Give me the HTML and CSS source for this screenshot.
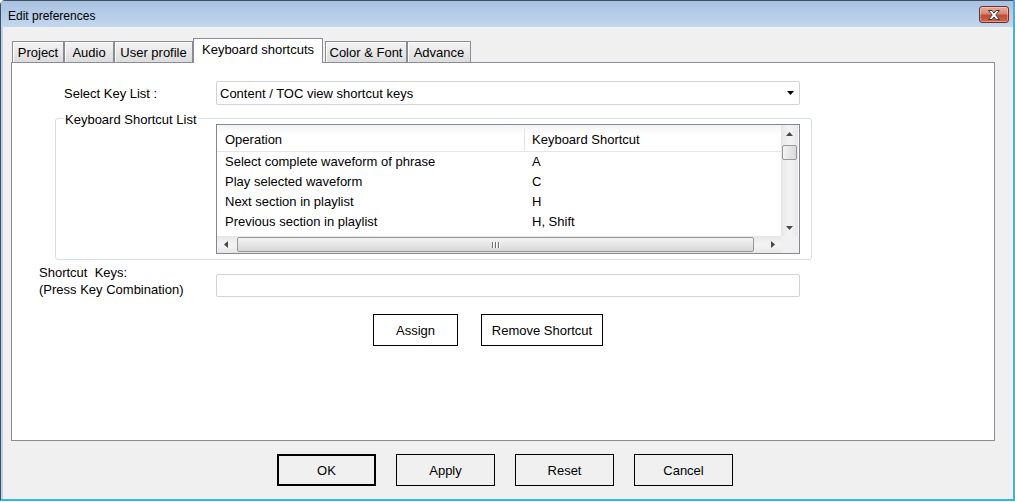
FILE: index.html
```html
<!DOCTYPE html>
<html>
<head>
<meta charset="utf-8">
<title>Edit preferences</title>
<link rel="stylesheet" href="styles.css">
</head>
<body>
<div class="window">
  <div class="titlebar">
    <span class="title">Edit preferences</span>
    <button class="close" aria-label="Close">
      <svg width="14" height="10" viewBox="0 0 14 10"><path d="M1.5 0.5 H5 L7 3 L9 0.5 H12.5 L8.8 5 L12.5 9.5 H9 L7 7 L5 9.5 H1.5 L5.2 5 Z" fill="#fff" stroke="#3b3b3b" stroke-width="1" stroke-linejoin="round"/></svg>
    </button>
  </div>
  <div class="client">
    <div class="tabs">
      <div class="tab tab-project">Project</div>
      <div class="tab tab-audio">Audio</div>
      <div class="tab tab-user">User profile</div>
      <div class="tab tab-keys active">Keyboard shortcuts</div>
      <div class="tab tab-color">Color &amp; Font</div>
      <div class="tab tab-advance">Advance</div>
    </div>
    <div class="panel">
      <div class="row-select">
        <span class="lbl-select">Select Key List :</span>
        <div class="combo">
          <span>Content / TOC view shortcut keys</span>
          <svg class="combo-arrow" width="7" height="4" viewBox="0 0 7 4"><path d="M0 0 H7 L3.5 4 Z" fill="#000"/></svg>
        </div>
      </div>
      <fieldset class="group">
        <legend>Keyboard Shortcut List</legend>
        <div class="listview">
          <div class="lv-main">
            <div class="lv-content">
              <div class="lv-header">
                <div class="col1">Operation</div>
                <div class="col2">Keyboard Shortcut</div>
              </div>
              <div class="lv-rows">
                <div class="lv-row"><div class="col1">Select complete waveform of phrase</div><div class="col2">A</div></div>
                <div class="lv-row"><div class="col1">Play selected waveform</div><div class="col2">C</div></div>
                <div class="lv-row"><div class="col1">Next section in playlist</div><div class="col2">H</div></div>
                <div class="lv-row"><div class="col1">Previous section in playlist</div><div class="col2">H, Shift</div></div>
              </div>
            </div>
            <div class="vscroll">
              <div class="sb-btn"><svg width="7" height="4" viewBox="0 0 7 4"><path d="M0 4 H7 L3.5 0 Z" fill="#4a4a4a"/></svg></div>
              <div class="vtrack"><div class="vthumb"></div></div>
              <div class="sb-btn"><svg width="7" height="4" viewBox="0 0 7 4"><path d="M0 0 H7 L3.5 4 Z" fill="#4a4a4a"/></svg></div>
            </div>
          </div>
          <div class="lv-bottom">
            <div class="hscroll">
              <div class="sb-btn"><svg width="4" height="7" viewBox="0 0 4 7"><path d="M4 0 V7 L0 3.5 Z" fill="#4a4a4a"/></svg></div>
              <div class="htrack"><div class="hthumb"><span class="grip"></span><span class="grip"></span><span class="grip"></span></div></div>
              <div class="sb-btn"><svg width="4" height="7" viewBox="0 0 4 7"><path d="M0 0 V7 L4 3.5 Z" fill="#4a4a4a"/></svg></div>
            </div>
            <div class="corner"></div>
          </div>
        </div>
      </fieldset>
      <div class="row-keys">
        <div class="lbl-keys">Shortcut&nbsp; Keys:<br>(Press Key Combination)</div>
        <div class="keys-input"></div>
      </div>
      <div class="row-actions">
        <button class="btn btn-assign">Assign</button>
        <button class="btn btn-remove">Remove Shortcut</button>
      </div>
    </div>
    <div class="footer">
      <button class="btn dlg default">OK</button>
      <button class="btn dlg">Apply</button>
      <button class="btn dlg">Reset</button>
      <button class="btn dlg">Cancel</button>
    </div>
  </div>
</div>
</body>
</html>
```

FILE: styles.css
```css
html, body {
  margin: 0;
  padding: 0;
  width: 1015px;
  height: 502px;
  overflow: hidden;
  background: #ffffff;
}

* { box-sizing: border-box; }

.window {
  width: 1015px;
  height: 501px;
  display: flex;
  flex-direction: column;
  background: #bcd2ea;
  border-left: 1px solid #3f4f63;
  border-top: 1px solid #3f4f63;
  border-right: 2px solid #37b7e0;
  border-bottom: 2px solid #37b7e0;
  border-top-left-radius: 5px;
  font-family: "Liberation Sans", Arial, sans-serif;
  font-size: 13px;
  color: #000;
}

.titlebar {
  height: 26px;
  display: flex;
  align-items: flex-start;
  justify-content: space-between;
  background: linear-gradient(#a8c2e0, #c3d7ee);
  padding-left: 7px;
  padding-right: 4px;
}

.title {
  font-size: 12px;
  line-height: 12px;
  margin-top: 9px;
  color: #000;
}

.close {
  margin-top: 5px;
  width: 30px;
  height: 17px;
  padding: 0;
  border: 1px solid #6f2e24;
  border-radius: 3px;
  background: linear-gradient(#e9a898 0%, #dc8672 45%, #c54a30 55%, #d0644a 100%);
  box-shadow: inset 0 0 0 1px rgba(255,255,255,0.35);
  display: flex;
  align-items: center;
  justify-content: center;
}

.client {
  flex: 1;
  margin-left: 2px;
  background: #f0f0f0;
  display: flex;
  flex-direction: column;
}

.tabs {
  display: flex;
  align-items: flex-end;
  height: 24px;
  margin-top: 11px;
  margin-left: 9px;
  position: relative;
  z-index: 1;
}

.tab {
  height: 21px;
  padding: 1px 0 0;
  line-height: 20px;
  text-align: center;
  border: 1px solid #898c95;
  border-bottom: none;
  background: linear-gradient(#f4f4f4, #dcdcdc);
  box-shadow: inset 1px 1px 0 #ffffff;
  white-space: nowrap;
}

.tab-project { width: 52px; }
.tab-audio { width: 50px; }
.tab-user { width: 79px; }
.tab-keys { width: 130px; }
.tab-color { width: 82px; }
.tab-advance { width: 64px; }

.tab.active {
  height: 25px;
  margin-bottom: -1px;
  margin-right: 2px;
  padding: 0;
  line-height: 21px;
  background: #ffffff;
  box-shadow: none;
}

.panel {
  margin-left: 8px;
  width: 984px;
  height: 379px;
  border: 1px solid #898c95;
  background: #ffffff;
  display: flex;
  flex-direction: column;
}

.row-select {
  display: flex;
  align-items: center;
  margin-top: 18px;
  height: 24px;
}

.lbl-select {
  margin-left: 52px;
  width: 152px;
}

.combo {
  width: 584px;
  height: 24px;
  border: 1px solid #d3d3d3;
  border-radius: 2px;
  display: flex;
  align-items: center;
  justify-content: space-between;
  padding: 0 2px 0 3px;
}

.combo-arrow {
  margin-right: 3px;
}

.group {
  margin: 5px 0 0 43px;
  width: 757px;
  padding: 0 0 5px 8px;
  border: 1px solid #d5dfe5;
  border-radius: 3px;
  min-width: 0;
}

.group legend {
  padding: 3px 1px 0;
  line-height: 13px;
}

.listview {
  margin-top: -2px;
  margin-left: 152px;
  width: 584px;
  height: 130px;
  border: 1px solid #828790;
  display: flex;
  flex-direction: column;
}

.lv-main {
  display: flex;
  height: 111px;
}

.lv-content {
  flex: 1;
  overflow: hidden;
}

.lv-header {
  display: flex;
  height: 27px;
  padding-top: 3px;
  border-bottom: 1px solid #e5e5e5;
  background: linear-gradient(#f3f4f5, #ffffff 40%);
  line-height: 23px;
}

.lv-header .col1 {
  border-right: 1px solid #e5e5e5;
}

.col1 {
  width: 308px;
  padding-left: 8px;
  white-space: nowrap;
}

.col2 {
  padding-left: 7px;
  white-space: nowrap;
}

.lv-rows {
  height: 84px;
  overflow: hidden;
}

.lv-row {
  display: flex;
  height: 20px;
  line-height: 20px;
}

.vscroll {
  width: 17px;
  display: flex;
  flex-direction: column;
  background: linear-gradient(90deg, #e6e6e6, #f2f2f2 40%, #f2f2f2 60%, #e6e6e6);
  margin-right: 1px;
}

.sb-btn {
  width: 17px;
  height: 17px;
  flex: none;
  display: flex;
  align-items: center;
  justify-content: center;
}

.vtrack {
  flex: 1;
}

.vthumb {
  margin: 3px 0 0 1px;
  width: 15px;
  height: 15px;
  border: 1px solid #979797;
  border-radius: 2px;
  background: linear-gradient(90deg, #f3f3f3, #e6e6e6 50%, #d9d9d9);
}

.lv-bottom {
  display: flex;
  height: 17px;
}

.hscroll {
  width: 564px;
  display: flex;
  background: linear-gradient(#e6e6e6, #f2f2f2 40%, #f2f2f2 60%, #e6e6e6);
}

.htrack {
  flex: 1;
  display: flex;
  align-items: center;
}

.hthumb {
  margin-left: 3px;
  width: 517px;
  height: 15px;
  border: 1px solid #979797;
  border-radius: 2px;
  background: linear-gradient(#f3f3f3, #e6e6e6 50%, #d6d6d6);
  display: flex;
  align-items: center;
  justify-content: center;
  gap: 2px;
}

.grip {
  width: 1px;
  height: 6px;
  background: #6f6f6f;
  box-shadow: 1px 0 0 #ffffff;
}

.corner {
  flex: 1;
  background: #f0f0f0;
}

.row-keys {
  display: flex;
  margin-top: 4px;
  margin-left: 27px;
}

.lbl-keys {
  width: 177px;
  line-height: 17px;
}

.keys-input {
  margin-top: 10px;
  width: 584px;
  height: 23px;
  border: 1px solid #d3d3d3;
  border-radius: 2px;
}

.row-actions {
  display: flex;
  gap: 23px;
  margin-top: 16px;
  margin-left: 361px;
}

.btn {
  font-family: "Liberation Sans", Arial, sans-serif;
  font-size: 13px;
  color: #000;
  height: 32px;
  border: 1px solid #000;
  border-radius: 0;
  background: #ffffff;
  padding: 0;
}

.btn-assign { width: 85px; }
.btn-remove { width: 122px; }

.footer {
  display: flex;
  gap: 20px;
  padding-top: 13px;
  padding-left: 274px;
}

.btn.dlg {
  width: 99px;
  background: #f0f0f0;
}

.btn.dlg.default {
  border: 2px solid #000;
}
```
